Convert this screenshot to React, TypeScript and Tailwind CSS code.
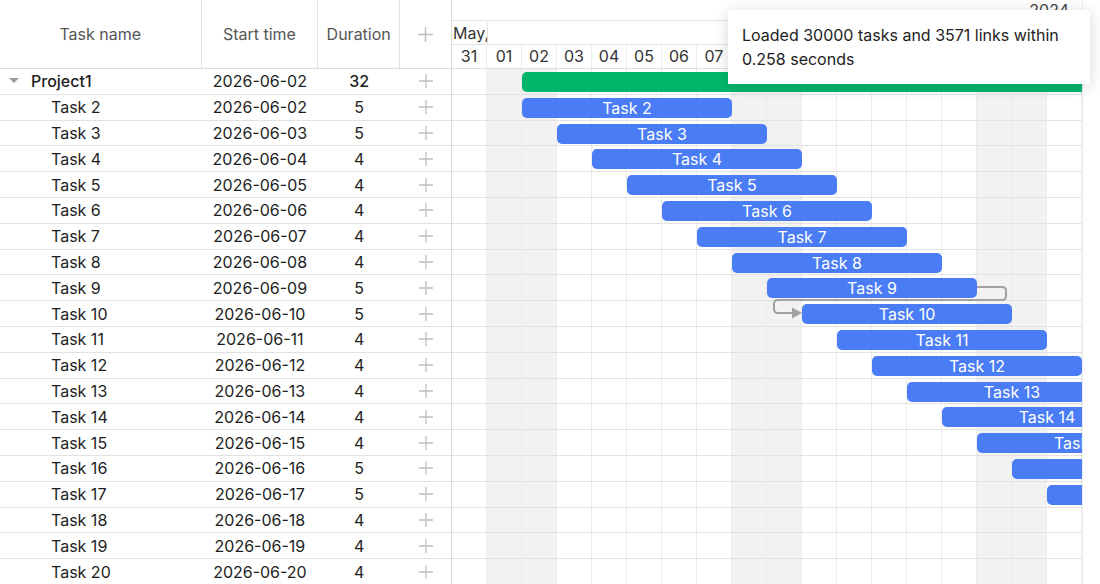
import React from "react";

const tasks = [
  { name: "Project1", start: "2026-06-02", duration: 32, project: true },
  ...[5, 5, 4, 4, 4, 4, 4, 5, 5, 4, 4, 4, 4, 4, 5, 5, 4, 4, 4].map((d, i) => ({
    name: `Task ${i + 2}`,
    start: `2026-06-${String(i + 2).padStart(2, "0")}`,
    duration: d,
    project: false,
  })),
];

const days = ["31", "01", "02", "03", "04", "05", "06", "07", "08", "09", "10", "11", "12", "13", "14", "15", "16", "17"];
const weekend = [1, 2, 8, 9, 15, 16];

const PlusIcon = ({ size = 16 }: { size?: number }) => (
  <svg width={size} height={size} viewBox="0 0 16 16" fill="none">
    <path d="M8 1v14M1 8h14" stroke="#bdbdbd" strokeWidth="1.3" />
  </svg>
);

const GridRow = ({ t }: { t: (typeof tasks)[number] }) => (
  <div className="flex h-[25.8px] items-center border-b border-[#e2e2e2] text-[16px] text-[#1d1d1d]">
    <div className="w-[202px] flex items-center">
      {t.project ? (
        <>
          <svg width="10" height="6" viewBox="0 0 10 6" className="ml-[9px] mr-[12px]">
            <path d="M0 0h10L5 5z" fill="#9a9a9a" />
          </svg>
          <span className="font-medium">{t.name}</span>
        </>
      ) : (
        <span className="pl-[51px]">{t.name}</span>
      )}
    </div>
    <div className="w-[117px] text-center">{t.start}</div>
    <div className={`w-[82px] text-center ${t.project ? "font-medium" : ""}`}>{t.duration}</div>
    <div className="w-[51px] flex justify-center">
      <PlusIcon />
    </div>
  </div>
);

// row 0 is the project, row n is "Task n+1" starting on day column n+1
const ChartRow = ({ row, project }: { row: number; project: boolean }) => (
  <div className="relative flex h-[25.8px] border-b border-[#e2e2e2]">
    {days.map((d, i) => (
      <div
        key={d}
        className={`w-[35px] shrink-0 border-r border-[#ececec] ${weekend.includes(i) ? "bg-[#f2f2f2]" : ""}`}
      />
    ))}
    {project ? (
      <div className="absolute left-[70px] top-[3px] h-[20px] w-[1120px] rounded-[5px] bg-[#00b66a]" />
    ) : (
      <div
        className="absolute top-[3px] h-[20px] w-[210px] rounded-[5px] bg-[#4a7cf6] text-white text-[16px] leading-[20px] text-center"
        style={{ left: (row + 1) * 35 }}
      >
        Task {row + 1}
      </div>
    )}
  </div>
);

export default function App() {
  return (
    <div className="relative flex w-[1100px] h-[584px] overflow-hidden bg-white font-['Inter',sans-serif]">
      {/* grid */}
      <div className="w-[452px] shrink-0 border-r border-[#dadada]">
        <div className="flex h-[69px] border-b border-[#dedede] text-[16px] text-[#555]">
          <div className="w-[202px] border-r border-[#e2e2e2] flex items-center justify-center">Task name</div>
          <div className="w-[117px] border-r border-[#e2e2e2] flex items-center justify-center">Start time</div>
          <div className="w-[82px] border-r border-[#e2e2e2] flex items-center justify-center">Duration</div>
          <div className="w-[51px] flex items-center justify-center">
            <PlusIcon size={17} />
          </div>
        </div>
        {tasks.map((t) => (
          <GridRow key={t.name} t={t} />
        ))}
      </div>

      {/* chart */}
      <div className="relative w-[631px] shrink-0 overflow-hidden border-r border-[#ececec]">
        <div className="h-[69px] border-b border-[#dedede] text-[16px] text-[#333]">
          <div className="h-[22px] border-b border-[#e2e2e2] flex justify-end pr-[13px] text-[#444] leading-[22px] -translate-y-[1px]">
            2024
          </div>
          <div className="flex h-[23px] border-b border-[#e2e2e2] leading-[22px]">
            <div className="w-[35px] overflow-hidden whitespace-nowrap pl-[1px]">May, 2026</div>
            <div className="flex-1 border-l border-[#e2e2e2]" />
          </div>
          <div className="flex h-[23px] leading-[23px]">
            {days.map((d) => (
              <div key={d} className="w-[35px] shrink-0 border-r border-[#ececec] text-center">
                {d}
              </div>
            ))}
          </div>
        </div>
        {tasks.map((t, i) => (
          <ChartRow key={t.name} row={i} project={t.project} />
        ))}
        <svg className="absolute left-0 top-0" width="631" height="584" fill="none">
          <path
            d="M525 287 H550 Q554 287 554 291 V296 Q554 300 550 300 H326 Q322 300 322 304 V309 Q322 313 326 313 H341"
            stroke="#a2a2a2"
            strokeWidth="2"
          />
          <path d="M340 307.5 L350 313 L340 318.5 Z" fill="#a2a2a2" />
        </svg>
      </div>

      {/* toast */}
      <div className="absolute left-[728px] top-[10px] w-[362px] h-[74px] bg-white px-[14px] pt-[13px] text-[16px] leading-[24px] text-[#222] shadow-[0_2px_14px_rgba(0,0,0,0.16)]">
        Loaded 30000 tasks and 3571 links within 0.258 seconds
      </div>
    </div>
  );
}
